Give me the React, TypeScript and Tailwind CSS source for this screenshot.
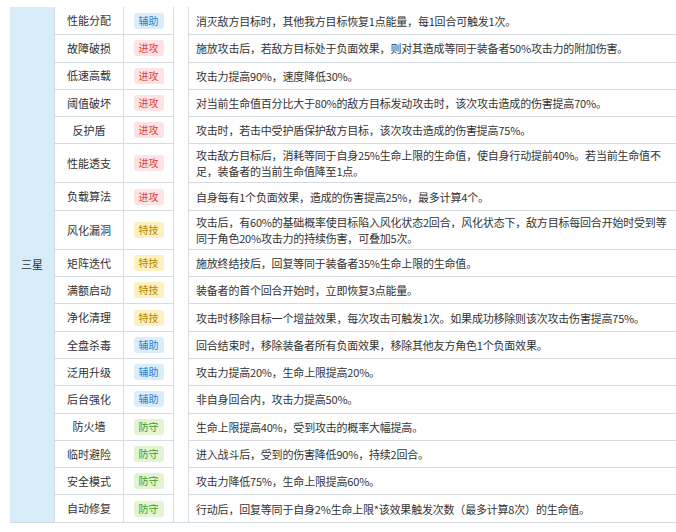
const rows: [string, string, string, boolean?][] = [
  ["性能分配", "辅助", "消灭敌方目标时，其他我方目标恢复1点能量，每1回合可触发1次。"],
  ["故障破损", "进攻", "施放攻击后，若敌方目标处于负面效果，则对其造成等同于装备者50%攻击力的附加伤害。"],
  ["低速高载", "进攻", "攻击力提高90%，速度降低30%。"],
  ["阈值破坏", "进攻", "对当前生命值百分比大于80%的敌方目标发动攻击时，该次攻击造成的伤害提高70%。"],
  ["反护盾", "进攻", "攻击时，若击中受护盾保护敌方目标，该次攻击造成的伤害提高75%。"],
  ["性能透支", "进攻", "攻击敌方目标后，消耗等同于自身25%生命上限的生命值，使自身行动提前40%。若当前生命值不足，装备者的当前生命值降至1点。", true],
  ["负载算法", "进攻", "自身每有1个负面效果，造成的伤害提高25%，最多计算4个。"],
  ["风化漏洞", "特技", "攻击后，有60%的基础概率使目标陷入风化状态2回合，风化状态下，敌方目标每回合开始时受到等同于角色20%攻击力的持续伤害，可叠加5次。", true],
  ["矩阵迭代", "特技", "施放终结技后，回复等同于装备者35%生命上限的生命值。"],
  ["满额启动", "特技", "装备者的首个回合开始时，立即恢复3点能量。"],
  ["净化清理", "特技", "攻击时移除目标一个增益效果，每次攻击可触发1次。如果成功移除则该次攻击伤害提高75%。"],
  ["全盘杀毒", "辅助", "回合结束时，移除装备者所有负面效果，移除其他友方角色1个负面效果。"],
  ["泛用升级", "辅助", "攻击力提高20%，生命上限提高20%。"],
  ["后台强化", "辅助", "非自身回合内，攻击力提高50%。"],
  ["防火墙", "防守", "生命上限提高40%，受到攻击的概率大幅提高。"],
  ["临时避险", "防守", "进入战斗后，受到的伤害降低90%，持续2回合。"],
  ["安全模式", "防守", "攻击力降低75%，生命上限提高60%。"],
  ["自动修复", "防守", "行动后，回复等同于自身2%生命上限*该效果触发次数（最多计算8次）的生命值。"],
];

const badge: Record<string, string> = {
  辅助: "bg-[#d9edfb] text-[#2d7dd2]",
  进攻: "bg-[#fde3e3] text-[#e0413b]",
  特技: "bg-[#fbf1c2] text-[#b98600]",
  防守: "bg-[#e2f4d4] text-[#3c9a25]",
};

export default function App() {
  return (
    <div
      className="h-[532px] w-[676px] overflow-hidden bg-white pt-[7px] pl-[10px] text-[11px] text-[#333]"
      style={{ fontFamily: '"Noto Sans CJK SC", "Liberation Sans", sans-serif' }}
    >
      <div className="flex border-b border-[#d5dbe3]">
        <div className="flex w-[45px] shrink-0 items-center justify-center border-r border-[#d5dbe3] bg-[#d6ecf9]">
          三星
        </div>
        <div className="flex-1">
          {rows.map(([name, type, desc, tall], i) => (
            <div key={name} className={`flex ${tall ? "h-[39px]" : "h-[27.3px]"}`}>
              <div className={`flex w-[69px] items-center justify-center border-r border-[#d5dbe3] ${i ? "border-t" : ""} border-t-[#d5dbe3]`}>
                {name}
              </div>
              <div className={`flex w-[50px] items-center justify-center border-r border-[#d5dbe3] ${i ? "border-t" : ""} border-t-[#d5dbe3]`}>
                <span className={`rounded-[3px] px-[5px] py-[1px] text-[10px] leading-[14px] ${badge[type]}`}>{type}</span>
              </div>
              <div className="w-[14px]" />
              <div className={`flex flex-1 items-center border-l border-[#d5dbe3] ${i ? "border-t" : ""} border-t-[#d5dbe3] pl-[7px] pr-[2px] leading-[16px] tracking-[-0.2px]`}>
                {desc}
              </div>
            </div>
          ))}
        </div>
      </div>
    </div>
  );
}
